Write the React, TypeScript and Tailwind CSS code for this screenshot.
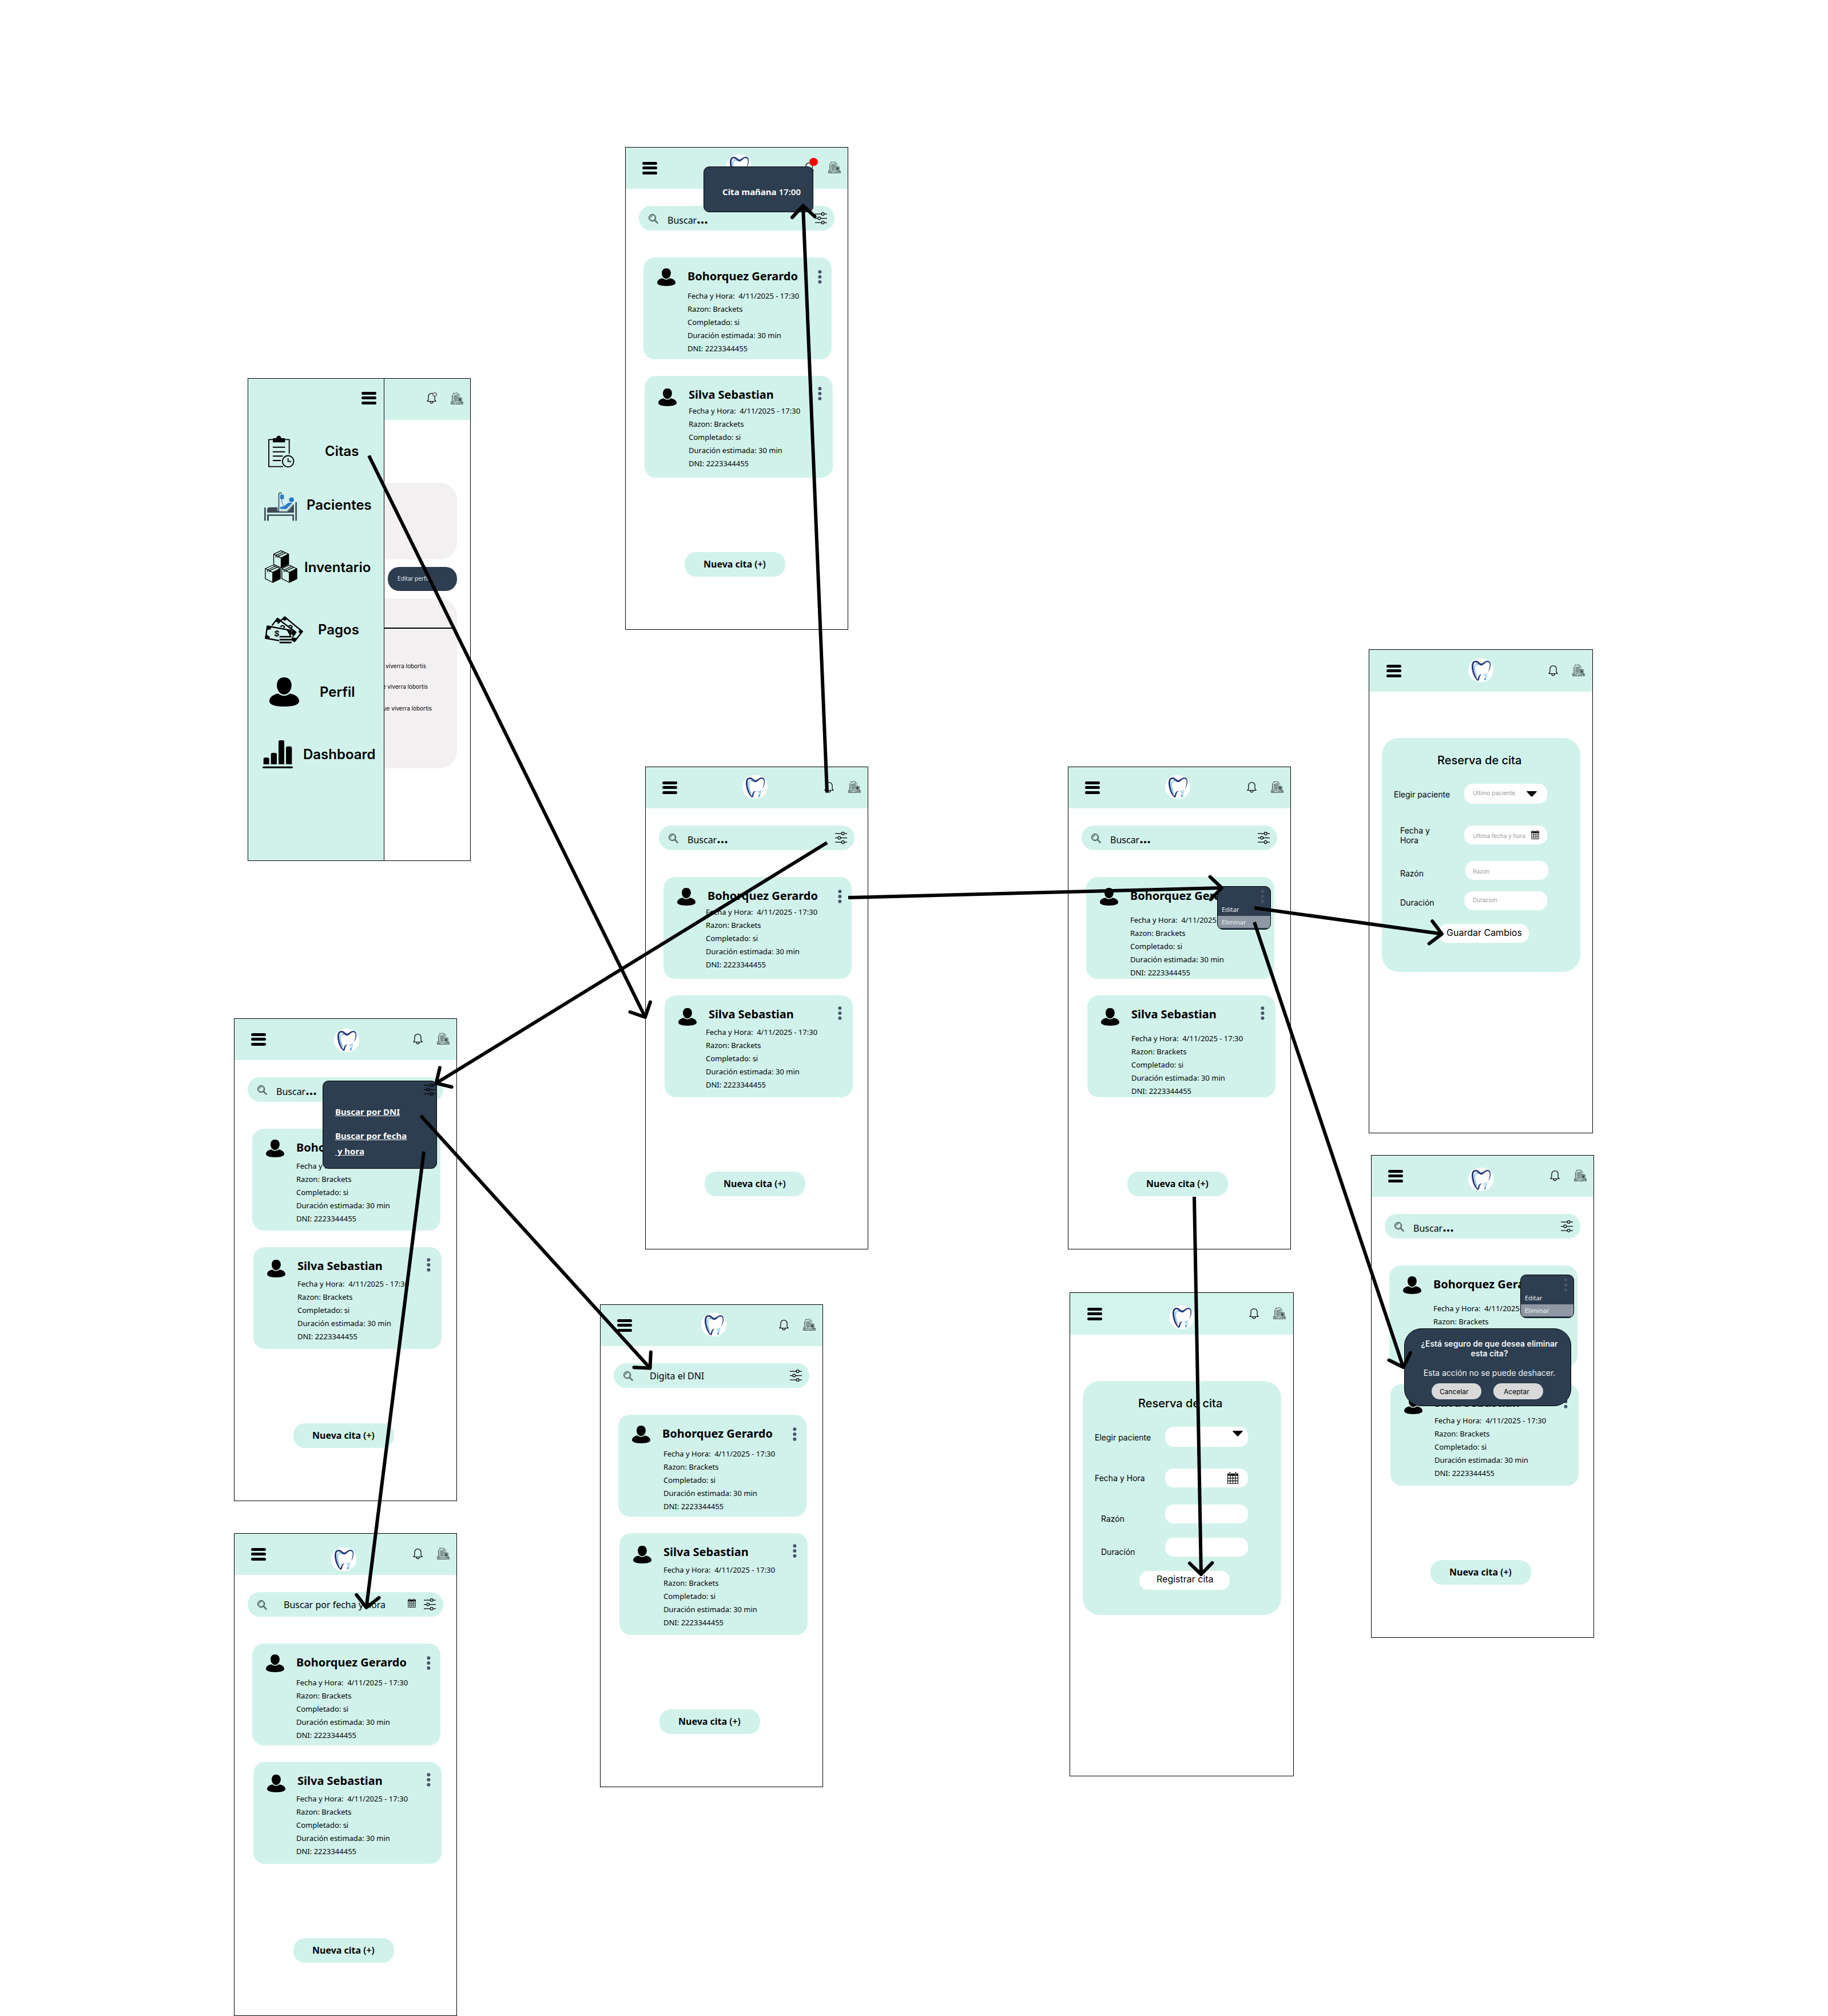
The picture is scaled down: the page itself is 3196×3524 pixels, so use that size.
import React from "react";

type Kids = { children?: React.ReactNode };

/* ---------- icons ---------- */

const Burger = ({ className = "" }: { className?: string }) => (
  <div className={`h-[22px] w-[26px] shrink-0 ${className}`}>
    <div className="h-[5px] rounded-full bg-black" />
    <div className="mt-[3px] h-[5px] rounded-full bg-black" />
    <div className="mt-[4px] h-[5px] rounded-full bg-black" />
  </div>
);

const Tooth = ({ className = "" }: { className?: string }) => (
  <div className={`h-[41px] w-[44px] shrink-0 rounded-[21px] bg-white ${className}`}>
    <svg viewBox="0 0 44 41" className="h-[41px] w-[44px]" fill="none" strokeLinecap="round" strokeLinejoin="round">
      <path
        d="M16.6 39C11 35.5 6.2 24 6 14.5C5.900 6 9.500 3.600 14 4C17.500 4.300 19.500 7.800 23 8.900C26.500 8 29 4.200 33.500 4C38.500 3.900 40 9 38.800 15C38 18.800 36.800 21 34.800 23.800C37 18.500 38.300 13 37.400 9.200C36.500 6 33.500 5.400 30.500 7.200C28 9 26 12 22.800 12.200C19 11.800 17.500 8 14 6.900C10.500 6.200 8.900 8.800 9 14C9.300 22.500 12.500 31.500 16.300 36.500C17.300 34.800 17.600 30 20.500 28.600C21.500 28 22.800 28 23.600 28.400C20.800 29 20.200 31.500 19.600 34.500C19.100 36.800 18.200 39.500 16.600 39Z"
        fill="#253a78"
      />
      <path d="M18.500 9.800C15 8.600 11.200 9.800 11 13.500C10.900 20 12.200 26 14.600 31.500" stroke="#2a9bd6" strokeWidth="1" />
      <path d="M18.500 10.800C15.500 10 13 11.500 12.800 14.500" stroke="#2a9bd6" strokeWidth=".5" />
      <path d="M33 25.800C31 28.200 29 28.500 27 28.600M33 28.800C31.500 30.300 30 30.700 28.300 30.900M32.500 31.600C31.300 32.700 30.200 33 29 33.200" stroke="#2a9bd6" strokeWidth=".9" />
      <path d="M28.200 35.500L31 34L30.200 37.200L28.800 38.200Z" fill="#1b8fd0" stroke="#1b8fd0" strokeWidth=".4" />
    </svg>
  </div>
);

const Bell = ({ className = "" }: { className?: string }) => (
  <svg viewBox="0 0 17 19" className={`h-[19px] w-[17px] shrink-0 ${className}`} fill="none" stroke="#000" strokeWidth="1.200" strokeLinejoin="round" strokeLinecap="round">
    <path d="M.8 14.500L2.900 12.100V6.300A5.600 5.700 0 0 1 14.100 6.300V12.100L16.200 14.500Z" />
    <path d="M5.800 14.900C6.200 18.700 10.800 18.700 11.200 14.900" />
  </svg>
);

const Building = ({ className = "" }: { className?: string }) => (
  <svg viewBox="0 0 22 21" className={`h-[21px] w-[22px] shrink-0 ${className}`} fill="none" stroke="#000" strokeWidth=".6">
    <path d="M3.300 15.500V4L4.700 3V1.200H6V2.600L10 .6L13 2V20.600" />
    <path d="M15.700 9V3.800L13.200 2.900M11 1V.2M2.400 15.500V5" strokeWidth=".4" />
    <path d="M5 6.500L12 3.500M5 9L12 6M5 11.500L12 8.500M5 14L12 11M7 15.500L12 13.500M5 6.500L12 6M5 9L12 8.500M5 11.500L12 11M5 14L12 13.600" strokeWidth=".5" />
    <path d="M13 9.500H19.300V20M14.300 11H18V12.300H14.300ZM14.300 13.300H18V14.800H14.300ZM15 16.300H18.300V17.500" />
    <path d="M14.500 11.600H17.500M14.500 14H17.500" strokeWidth=".9" />
    <path d="M.4 20.600H21.600V17H19.400M.4 20.600V16H5V20.600M2.700 17.500V20.600M.4 18.200H4.500M7 20.600V16.500H10.500V20.600M13 18H21.600M16 18V20.600" />
  </svg>
);

const Magnifier = ({ className = "" }: { className?: string }) => (
  <svg viewBox="0 0 17 17" className={`h-[17px] w-[17px] shrink-0 ${className}`} fill="none" stroke="#14201e">
    <circle cx="6.600" cy="6.600" r="6.100" strokeWidth=".9" />
    <circle cx="6.600" cy="6.600" r="4.700" strokeWidth=".8" />
    <path d="M4 6.200A2.900 2.900 0 0 1 6.500 3.500M10.600 11.400L11.600 10.400L16.300 15Q16.500 16.600 14.900 16.500Z" strokeWidth=".9" />
    <path d="M11.200 10.900L15.300 15.200" strokeWidth=".5" />
  </svg>
);

const Sliders = ({ className = "" }: { className?: string }) => (
  <svg viewBox="0 0 21 21" className={`h-[21px] w-[21px] shrink-0 ${className}`} fill="none" stroke="#000" strokeWidth="1.250">
    <path d="M0 3H11M16.400 3H21M0 10.500H4.600M10 10.500H21M0 18H11M16.400 18H21" />
    <circle cx="13.700" cy="3" r="2.400" />
    <circle cx="7.300" cy="10.500" r="2.400" />
    <circle cx="13.700" cy="18" r="2.400" />
  </svg>
);

const Person = ({ className = "" }: { className?: string }) => (
  <svg viewBox="0 0 156 153" preserveAspectRatio="none" className={`shrink-0 ${className}`}>
    <path d="M77 0C101 0 116 16 116 42C116 68 98 90 77 90S39 68 39 42C39 16 54 0 77 0Z" />
    <path d="M46 85C54 92 64 97 77 97S100 92 108 85C132 91 156 101 156 125C156 145 120 153 78 153S0 145 0 125C0 101 22 91 46 85Z" />
  </svg>
);

const Calendar = ({ className = "" }: { className?: string }) => (
  <svg viewBox="0 0 14 16" preserveAspectRatio="none" className={`shrink-0 ${className}`}>
    <path d="M0 2H2.500V4H4V2H9.800V4H11.300V2H14V5.200H0Z" />
    <path d="M3.200 0V3.400M10.600 0V3.400" stroke="#000" strokeWidth="1" />
    <path d="M.4 5V15.500H13.600V5M.4 8.300H13.600M.4 11.900H13.600M3.700 5V15.500M7 5V15.500M10.300 5V15.500" fill="none" stroke="#000" strokeWidth=".8" />
  </svg>
);

const Caret = ({ className = "" }: { className?: string }) => (
  <svg viewBox="0 0 18 10" className={`h-[10px] w-[18px] shrink-0 ${className}`}>
    <path d="M.8 0H17.200Q18.400 .5 17.500 1.300L10 9.300Q9 10.200 8 9.300L.5 1.300Q-.4 .5 .8 0Z" />
  </svg>
);

const Kebab = ({ className = "" }: { className?: string }) => (
  <svg viewBox="0 0 7 24" className={`h-[24px] w-[7px] shrink-0 ${className}`} fill="#4a5568">
    <circle cx="3.400" cy="3.200" r="3" />
    <circle cx="3.400" cy="11.900" r="3" />
    <circle cx="3.400" cy="20.700" r="3" />
  </svg>
);

const Clipboard = ({ className = "" }: { className?: string }) => (
  <svg viewBox="0 0 138 168" className={`shrink-0 ${className}`} fill="none" stroke="#000" strokeWidth="5.500">
    <path d="M24 22H3V164H78M88 22H110V97" />
    <path d="M24 15H42A13 13 0 0 1 68 15H88V37H24Z" fill="#000" stroke="none" />
    <path d="M26 62H86M26 86H86M26 109H74M26 132H64" strokeWidth="6" strokeLinecap="round" />
    <circle cx="104" cy="136" r="29.500" />
    <path d="M104 120V137H120" />
  </svg>
);

const PatientBed = ({ className = "" }: { className?: string }) => (
  <svg viewBox="0 0 171 155" className={`shrink-0 ${className}`}>
    <g fill="#3e4a56">
      <path d="M0 84H8V153H0ZM163 56H171V153H163ZM15 120H156V153H148V128H24V153H15Z" />
      <path d="M15 111V96Q15 83 29 83H70V101H120L150 67H156V111Z" />
      <path d="M74 101V12Q77 1 87 4Q92 6 93 15L89 15Q88 8 83 8Q79 8 79 16V101Z" />
    </g>
    <g fill="#2a78c4">
      <path d="M84 17H103V40H84Z" />
      <circle cx="143" cy="43" r="13" />
      <path d="M84 80H100L125 60Q134 57 147 60L116 92H84Z" />
    </g>
    <path d="M91 40Q91 56 97 65Q102 72 101 82" fill="none" stroke="#2a78c4" strokeWidth="3" />
    <path d="M80 94V103H122L155 66" fill="none" stroke="#d1f2eb" strokeWidth="3" />
    <path d="M15 113H156" stroke="#d1f2eb" strokeWidth="2" />
  </svg>
);

const Box = ({ x, y }: { x: number; y: number }) => (
  <g transform={`translate(${x} ${y})`} stroke="#000" strokeWidth="4" strokeLinejoin="round">
    <path d="M2 20L41 2L80 20V73L41 92L2 73Z" fill="#d1f2eb" />
    <path d="M41 40L80 20V73L41 92Z" fill="#000" />
    <path d="M2 20L41 40L80 20M14 26L53 8M24 31L65 13M14 26V38M24 31V38" fill="none" />
  </g>
);

const Boxes = ({ className = "" }: { className?: string }) => (
  <svg viewBox="0 0 170 171" className={`shrink-0 ${className}`}>
    <Box x={44} y={0} />
    <Box x={0} y={76} />
    <Box x={87} y={76} />
  </svg>
);

const Cash = ({ className = "" }: { className?: string }) => (
  <svg viewBox="0 0 201 143" className={`shrink-0 ${className}`} stroke="#000" strokeWidth="7" strokeLinejoin="round">
    <path d="M68 38L104 4L197 80L156 132L140 118" fill="none" />
    <path d="M92 14L104 1L118 12L104 24ZM184 66L200 80L188 94L178 82ZM142 112L170 116L156 134L142 128Z" strokeWidth="2" />
    <path d="M38 48L66 12L163 84L146 108" fill="none" />
    <path d="M54 24L66 8L84 20L66 32ZM148 70L166 84L152 104L138 92Z" strokeWidth="2" />
    <path d="M13 52L4 115L75 128" fill="none" />
    <path d="M13 52L138 74L132 104" fill="#d1f2eb" />
    <path d="M12 50L36 54L30 68L10 72ZM6 96L26 108L20 120L2 116ZM114 70L140 74L134 104Z" strokeWidth="2" />
    <g fill="#000" stroke="none" fontFamily="Liberation Sans" fontWeight="bold">
      <text x="50" y="107" fontSize="46" transform="rotate(8 64 92)">$</text>
    </g>
    <path d="M82 56Q92 44 104 56L98 62M124 54Q136 42 144 56L136 62" fill="none" strokeWidth="6" />
    <path d="M77 107.500H140M77 123H140M77 138H140" strokeWidth="8" />
  </svg>
);

const Bars = ({ className = "" }: { className?: string }) => (
  <svg viewBox="0 0 159 147" className={`shrink-0 ${className}`}>
    <path d="M5 126V100Q5 91 14 91H26Q35 91 35 100V126ZM44 126V75Q44 66 53 66H66Q75 66 75 75V126ZM84 126V8Q84 0 92 0H106Q114 0 114 8V126ZM123 126V41Q123 32 132 32H145Q154 32 154 41V126Z" />
    <rect x="0" y="137" width="159" height="10" rx="5" />
  </svg>
);

/* ---------- shared pieces ---------- */

const Screen = ({ at, outside = false, children }: Kids & { at: string; outside?: boolean }) => (
  <section
    className={`absolute h-[844px] w-[390px] bg-white after:pointer-events-none after:absolute after:border after:border-black after:content-[''] ${
      outside ? "after:-inset-px" : "after:inset-0"
    } ${at}`}
  >
    {children}
  </section>
);

const Header = ({ logo, badge, tint = "bg-[#d1f2eb]" }: { logo?: string; badge?: string; tint?: string }) => (
  <header className={`relative flex h-[73px] items-start ${tint}`}>
    <Burger className="mt-[26px] ml-[30px]" />
    <div className="flex h-full flex-1 items-start">{logo && <Tooth className={logo} />}</div>
    <Bell className="mt-[27px]" />
    {badge && <span className={`absolute rounded-full ${badge}`} />}
    <Building className="mt-[25px] mr-[13px] ml-[25px]" />
  </header>
);

const SearchBar = ({ hint, calendar = false }: { hint?: string; calendar?: boolean }) => (
  <div className="mt-[30px] ml-[24px] flex h-[43px] w-[342px] items-start rounded-[21px] bg-[#d1f2eb]">
    <Magnifier className="mt-[14px] ml-[17px]" />
    {hint ? (
      <p className="mt-[11px] ml-[29px] flex-1 text-[16px] leading-[22px] whitespace-nowrap">{hint}</p>
    ) : (
      <p className="mt-[11px] ml-[16px] flex-1 text-[16px] leading-[27px] whitespace-nowrap">
        Buscar<span className="text-[23px] leading-none font-bold">...</span>
      </p>
    )}
    {calendar && <Calendar className="mt-[11px] mr-[14px] h-[16px] w-[14px]" />}
    <Sliders className="mt-[11px] mr-[13px]" />
  </div>
);

const Appointment = ({
  name,
  card,
  avatar,
  title,
  info,
  dots,
}: {
  name: string;
  card: string;
  avatar: string;
  title: string;
  info: string;
  dots: string;
}) => (
  <article className={`flex h-[178px] w-[329px] items-start rounded-[20px] bg-[#d1f2eb] ${card}`}>
    <Person className={`ml-[24px] h-[31px] w-[32px] ${avatar}`} />
    <div className="ml-[21px] w-[228px]">
      <h2 className={`text-[20px] leading-[24px] font-bold whitespace-nowrap ${title}`}>{name}</h2>
      <div className={`text-[13px] leading-[23px] whitespace-pre ${info}`}>
        <p>{"Fecha y Hora:  4/11/2025 - 17:30"}</p>
        <p>Razon: Brackets</p>
        <p>Completado: si</p>
        <p>Duración estimada: 30 min</p>
        <p>DNI: 2223344455</p>
      </div>
    </div>
    <Kebab className={dots} />
  </article>
);

const Agenda = ({ first, second }: { first: string; second: string }) => (
  <>
    <Appointment
      name="Bohorquez Gerardo"
      card="mt-[47px] ml-[32px]"
      avatar="mt-[19px]"
      title="mt-[21px]"
      info={first}
      dots="mt-[22px]"
    />
    <Appointment
      name="Silva Sebastian"
      card="mt-[29px] ml-[34px]"
      avatar="mt-[22px]"
      title="mt-[21px]"
      info={second}
      dots="mt-[19px] -ml-[2px]"
    />
    <button className="mt-[130px] ml-[104px] flex h-[43px] w-[176px] items-start rounded-[20px] bg-[#d1f2eb] pt-[10px] pl-[33px] text-[16px] leading-[22px] font-bold whitespace-pre">
      Nueva cita <span className="font-semibold">(+)</span>
    </button>
  </>
);

const RowMenu = () => (
  <div className="absolute top-[209px] left-[261px] h-[76px] w-[94px] overflow-hidden rounded-[10px] border border-black bg-[#2d3e50] text-[11px] leading-[15px] text-[#eef1f3]">
    <Kebab className="mt-[5px] ml-[75px] opacity-90" />
    <p className="mt-[3px] ml-[7px]">Editar</p>
    <p className="-mx-px mt-[4px] h-[21px] bg-[#8f98a3] pt-[3px] pl-[8px]">Eliminar</p>
  </div>
);

const Field = ({
  label,
  row,
  labelBox,
  input,
  children,
}: Kids & { label: string; row: string; labelBox: string; input: string }) => (
  <div className={`flex items-start ${row}`}>
    <p className={`w-[144px] shrink-0 text-[14px] leading-[17px] whitespace-pre ${labelBox}`}>{label}</p>
    <div className={`flex w-[145px] items-start rounded-[15px] bg-white text-[10px] leading-[12px] text-[#9b9b9b] ${input}`}>
      {children}
    </div>
  </div>
);

const FormCard = ({ children }: Kids) => (
  <div className="mt-[81px] ml-[22px] h-[409px] w-[347px] rounded-[30px] bg-[#d1f2eb] pt-[27px] font-['Inter',sans-serif]">
    <h2 className="ml-[97px] text-[20px] leading-[24px] font-medium whitespace-nowrap">Reserva de cita</h2>
    {children}
  </div>
);

/* ---------- side menu screen ---------- */

const MenuRow = ({ row, label, children }: Kids & { row: string; label: [string, string] }) => (
  <li className={`flex items-start ${row}`}>
    {children}
    <span className={`text-[24px] leading-[29px] font-semibold whitespace-nowrap ${label[1]}`}>{label[0]}</span>
  </li>
);

const SideMenu = () => (
  <Screen at="top-[661px] left-[433px]">
    <div className="flex h-full font-['Inter',sans-serif]">
      <nav className="h-full w-[239px] shrink-0 border border-black bg-[#d1f2eb]">
        <Burger className="mt-[23px] ml-[198px]" />
        <ul className="-ml-px">
          <MenuRow row="mt-[54px] h-[56px] pl-[36px]" label={["Citas", "mt-[13px] ml-[53px]"]}>
            <Clipboard className="h-[56px] w-[46px]" />
          </MenuRow>
          <MenuRow row="mt-[42px] h-[52px] pl-[29px]" label={["Pacientes", "mt-[9px] ml-[17px]"]}>
            <PatientBed className="h-[52px] w-[57px]" />
          </MenuRow>
          <MenuRow row="mt-[51px] h-[57px] pl-[30px]" label={["Inventario", "mt-[15px] ml-[12px]"]}>
            <Boxes className="h-[57px] w-[57px]" />
          </MenuRow>
          <MenuRow row="mt-[58px] h-[48px] pl-[30px]" label={["Pagos", "mt-[9px] ml-[26px]"]}>
            <Cash className="h-[48px] w-[67px]" />
          </MenuRow>
          <MenuRow row="mt-[59px] h-[51px] pl-[38px]" label={["Perfil", "mt-[11px] ml-[36px]"]}>
            <Person className="h-[51px] w-[52px]" />
          </MenuRow>
          <MenuRow row="mt-[59px] h-[49px] pl-[26px]" label={["Dashboard", "mt-[10px] ml-[18px]"]}>
            <Bars className="h-[49px] w-[53px]" />
          </MenuRow>
        </ul>
      </nav>
      <div className="flex flex-1 flex-col items-start overflow-hidden text-[10px] leading-[12px]">
        <div className="relative flex h-[73px] w-full items-start bg-[#d1f2eb]">
          <Bell className="mt-[26px] ml-[74px]" />
          <span className="absolute top-[25px] left-[84px] h-[7px] w-[8px] rounded-full border border-[#222] bg-[#d9d9d9]" />
          <Building className="mt-[25px] ml-[25px]" />
        </div>
        <div className="mt-[110px] h-[134px] w-[127px] rounded-r-[30px] bg-[#f3f0f2]" />
        <div className="mt-[13px] ml-[6px] h-[42px] w-[121px] rounded-[20px] bg-[#2d3e50] pt-[14px] pl-[17px] whitespace-nowrap text-[#e4e8ec]">
          Editar perfil
        </div>
        <div className="mt-[13px] flex h-[297px] w-[127px] flex-col rounded-r-[30px] bg-[#f3f0f2]">
          <div className="mt-[51px] h-[2px] w-[119px] bg-black" />
          <div className="mt-[59px] flex w-[73px] justify-end whitespace-nowrap">viverra lobortis</div>
          <div className="mt-[24px] flex w-[76px] justify-end whitespace-nowrap">e viverra lobortis</div>
          <div className="mt-[26px] flex w-[83px] justify-end whitespace-nowrap">ue viverra lobortis</div>
        </div>
      </div>
    </div>
  </Screen>
);

/* ---------- flow arrows ---------- */

const FLOWS: [number, number, number, number][] = [
  [645, 796.5, 1128, 1778],
  [1446, 1385.500, 1404, 359.5],
  [1446, 1473, 762.500, 1893.5],
  [1483, 1569, 2136, 1552],
  [2193, 1587, 2521, 1632.5],
  [2193, 1612, 2453.5, 2390],
  [2088, 2092, 2100, 2752],
  [735.500, 1950, 1136.500, 2391.500],
  [741, 2013, 640.500, 2810],
];

const ARM = 28;

const Arrow = ({ p }: { p: [number, number, number, number] }) => {
  const [x1, y1, x2, y2] = p;
  const back = Math.atan2(y1 - y2, x1 - x2);
  const tip = (turn: number) =>
    `${x2 + ARM * Math.cos(back + turn)} ${y2 + ARM * Math.sin(back + turn)}`;
  return (
    <>
      <path d={`M${x1} ${y1}L${x2} ${y2}`} />
      <path d={`M${tip(Math.PI / 4)}L${x2} ${y2}L${tip(-Math.PI / 4)}`} strokeLinecap="round" strokeLinejoin="round" />
    </>
  );
};

/* ---------- board ---------- */

export default function App() {
  return (
    <main className="relative h-[3524px] w-[3196px] overflow-hidden bg-white font-['Noto_Sans',sans-serif] text-black">
      <Screen at="top-[257px] left-[1093px]">
        <Header logo="mt-[13px] ml-[121px]" badge="top-[19px] left-[322px] h-[14px] w-[15px] bg-[#ff0000] z-10" />
        <SearchBar />
        <Agenda first="mt-[11px]" second="mt-[5px]" />
        <div className="absolute top-[34px] left-[137px] h-[80px] w-[192px] rounded-[10px] border border-black bg-[#2d3e50] pt-[32px] pl-[32px] text-[15px] leading-[22px] font-bold whitespace-nowrap text-white">
          Cita mañana <span className="font-semibold">17:00</span>
        </div>
      </Screen>

      <SideMenu />

      <Screen at="top-[1340px] left-[1128px]">
        <Header logo="mt-[15px] ml-[114px]" />
        <SearchBar />
        <Agenda first="mt-[5px] -ml-[3px]" second="mt-[8px] -ml-[5px]" />
      </Screen>

      <Screen at="top-[1340px] left-[1867px]">
        <Header logo="mt-[15px] ml-[114px]" />
        <SearchBar />
        <Agenda first="mt-[19px]" second="mt-[19px]" />
        <RowMenu />
      </Screen>

      <Screen at="top-[1136px] left-[2394px]" outside>
        <Header logo="mt-[15px] ml-[117px]" />
        <FormCard>
          <Field label="Elegir paciente" row="mt-[29px]" labelBox="mt-[10px] pl-[21px]" input="h-[35px]">
            <span className="mt-[10px] ml-[15px] flex-1 whitespace-nowrap">Ultimo paciente</span>
            <Caret className="mt-[13px] mr-[18px]" />
          </Field>
          <Field label={"Fecha y\nHora"} row="mt-[38px] h-[33px]" labelBox="pl-[32px]" input="h-[33px]">
            <span className="mt-[12px] ml-[15px] flex-1 whitespace-nowrap">Ultima fecha y hora</span>
            <Calendar className="mt-[8px] mr-[14px] h-[16px] w-[14px]" />
          </Field>
          <Field label="Razón" row="mt-[29px]" labelBox="mt-[13px] pl-[32px]" input="ml-[2px] h-[33px]">
            <span className="mt-[12px] ml-[13px]">Razon</span>
          </Field>
          <Field label="Duración" row="mt-[20px]" labelBox="mt-[11px] pl-[32px]" input="h-[33px]">
            <span className="mt-[9px] ml-[15px]">Duracion</span>
          </Field>
          <button className="mt-[24px] ml-[99px] flex h-[33px] w-[158px] items-start rounded-[15px] bg-white pt-[6px] pl-[14px] text-[16px] leading-[19px] whitespace-nowrap">
            Guardar Cambios
          </button>
        </FormCard>
      </Screen>

      <Screen at="top-[2260px] left-[1871px]" outside>
        <Header logo="mt-[22px] ml-[117px]" tint="bg-[#d3f4ed]" />
        <FormCard>
          <Field label="Elegir paciente" row="mt-[29px]" labelBox="mt-[10px] pl-[21px]" input="h-[35px]">
            <Caret className="mt-[7px] ml-[118px]" />
          </Field>
          <Field label="Fecha y Hora" row="mt-[38px]" labelBox="mt-[8px] pl-[21px]" input="h-[33px]">
            <Calendar className="mt-[6px] ml-[109px] h-[21px] w-[19px]" />
          </Field>
          <Field label="Razón" row="mt-[30px]" labelBox="mt-[16px] pl-[32px]" input="h-[33px]" />
          <Field label="Duración" row="mt-[25px]" labelBox="mt-[16px] pl-[32px]" input="h-[33px]" />
          <button className="mt-[25px] ml-[99px] flex h-[33px] w-[158px] items-start rounded-[15px] bg-white pt-[5px] pl-[30px] text-[16px] leading-[19px] whitespace-nowrap">
            Registrar cita
          </button>
        </FormCard>
      </Screen>

      <Screen at="top-[2019px] left-[2397px]">
        <Header logo="mt-[22px] ml-[114px]" />
        <SearchBar />
        <Agenda first="mt-[19px]" second="mt-[8px]" />
        <RowMenu />
        <div className="absolute top-[303px] left-[58px] h-[136px] w-[292px] rounded-[30px] border border-black bg-[#2d3e50] pt-[17px] font-['Inter',sans-serif] text-[14px] leading-[17px] text-[#f4f6f7]">
          <p className="ml-[6px] text-center font-semibold">
            ¿Está seguro de que desea eliminar
            <br />
            esta cita?
          </p>
          <p className="mt-[17px] ml-[6px] text-center whitespace-nowrap">Esta acción no se puede deshacer.</p>
          <div className="mt-[10px] ml-[47px] flex gap-[21px] text-[12px] leading-[15px] text-black">
            <button className="h-[28px] w-[87px] rounded-[14px] bg-[#d9d9d9] pl-[14px] pt-px text-left">Cancelar</button>
            <button className="h-[28px] w-[87px] rounded-[14px] bg-[#d9d9d9] pl-[18px] text-left">Aceptar</button>
          </div>
        </div>
      </Screen>

      <Screen at="top-[1780px] left-[409px]">
        <Header logo="mt-[18px] ml-[119px]" />
        <SearchBar />
        <Agenda first="mt-[9px]" second="mt-[8px]" />
        <div className="absolute top-[109px] left-[155px] h-[154px] w-[200px] rounded-[10px] border border-black bg-[#2d3e50] pl-[21px] text-[15px] leading-[27px] font-bold whitespace-pre text-white underline">
          <Sliders className="mt-[4px] ml-[155px]" />
          <p className="mt-[15px]">Buscar por DNI</p>
          <p className="mt-[15px]">Buscar por fecha</p>
          <p>{" y hora"}</p>
        </div>
      </Screen>

      <Screen at="top-[2280px] left-[1049px]">
        <Header logo="mt-[15px] ml-[121px]" />
        <SearchBar hint="Digita el DNI" />
        <Agenda first="mt-[12px] ml-[2px]" second="mt-[8px]" />
      </Screen>

      <Screen at="top-[2680px] left-[409px]">
        <Header logo="mt-[25px] ml-[114px]" />
        <SearchBar hint="Buscar por fecha y hora" calendar />
        <Agenda first="mt-[12px]" second="mt-[8px] -ml-[2px]" />
      </Screen>

      <svg viewBox="0 0 3196 3524" className="pointer-events-none absolute inset-0 h-full w-full" fill="none" stroke="#000" strokeWidth="6">
        {FLOWS.map((p, i) => (
          <Arrow key={i} p={p} />
        ))}
      </svg>
    </main>
  );
}
